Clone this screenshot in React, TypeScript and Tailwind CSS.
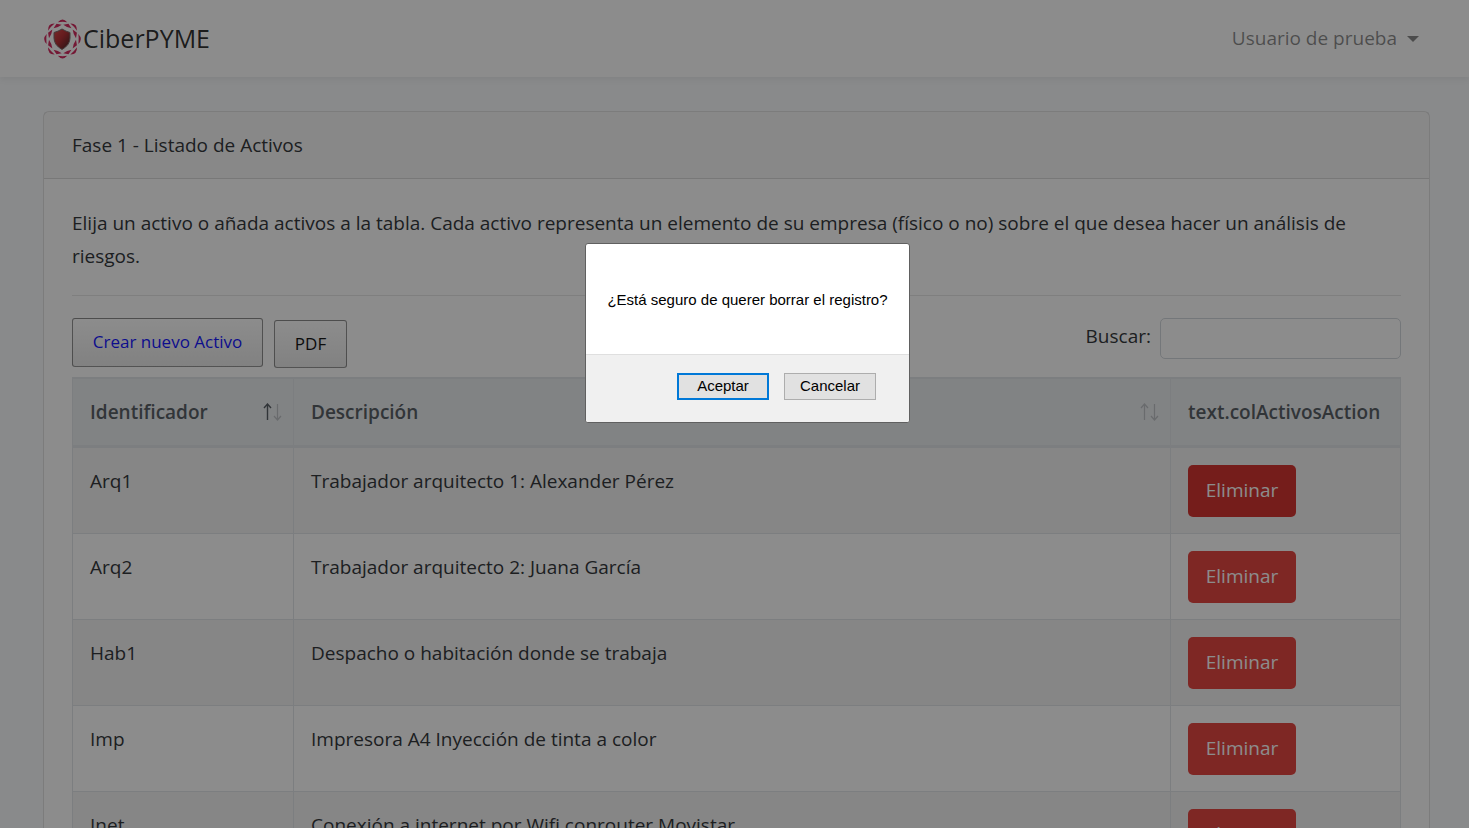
const rows = [
  ["Arq1", "Trabajador arquitecto 1: Alexander Pérez"],
  ["Arq2", "Trabajador arquitecto 2: Juana García"],
  ["Hab1", "Despacho o habitación donde se trabaja"],
  ["Imp", "Impresora A4 Inyección de tinta a color"],
  ["Inet", "Conexión a internet por Wifi conrouter Movistar"],
];

function Logo() {
  return (
    <svg width="40" height="42" viewBox="0 0 40 42" fill="none" aria-hidden="true">
      <defs>
        <linearGradient id="shield" x1="0" y1="0" x2="1" y2="1">
          <stop offset="0" stopColor="#d33a3a" />
          <stop offset="0.45" stopColor="#b01d22" />
          <stop offset="1" stopColor="#2c1013" />
        </linearGradient>
      </defs>
      <g fill="#cf1650" transform="translate(19.5 21) scale(0.94 1) translate(-19.5 -21)">
        {[0, 45, 90, 135, 180, 225, 270, 315].map((a) => (
          <g key={a} transform={`rotate(${a} 19.5 21)`}>
            <path d="M14.5 4.200Q19.5-1.2 24.5 4.2Q19.5 3.400 14.5 4.200Z" />
            <path d="M14.8 7.400L19.5 4.400L24.2 7.400Q19.5 8.600 14.8 7.400Z" transform="rotate(22.5 19.5 21)" />
          </g>
        ))}
      </g>
      <path d="M19 11Q23 13.500 27 14.500V20Q27 27 19 31.500Q11 27 11 20V14.500Q15 13.500 19 11Z" fill="url(#shield)" stroke="#6d5c5d" strokeWidth="1" />
    </svg>
  );
}

function SortArrows({ ascending = false }: { ascending?: boolean }) {
  return (
    <svg width="20" height="18" viewBox="0 0 20 18" fill="none" stroke="currentColor" className="shrink-0" aria-hidden="true">
      <path d="M4.500 17V1M1 5L4.500 1L8 5" strokeWidth={ascending ? 1.4 : 1.2} opacity={ascending ? 1 : 0.3} />
      <path d="M14.500 1V17M11 13L14.500 17L18 13" strokeWidth="1.2" opacity="0.3" />
    </svg>
  );
}

export default function App() {
  return (
    <div className="h-screen overflow-hidden bg-[#f8fafc] font-['Open_Sans',sans-serif] text-[19px] leading-[33px] text-[#212529]">
      <nav className="flex h-[77px] items-center justify-between bg-white pr-[50px] pl-[43px] shadow-[0_3px_6px_rgba(0,0,0,0.06)]">
        <a href="#" className="flex items-center text-[25px] text-black/90">
          <Logo />
          CiberPYME
        </a>
        <button type="button" className="flex items-center gap-[10px] text-black/50">
          Usuario de prueba
          <svg width="12" height="6" viewBox="0 0 12 6" fill="currentColor" aria-hidden="true">
            <path d="M0 0H12L6 6Z" />
          </svg>
        </button>
      </nav>

      <main className="mr-[39px] ml-[43px] pt-[34px]">
        <section className="rounded-[6px] border border-black/13 bg-white">
          <h1 className="border-b border-black/13 bg-black/3 px-7 pt-[17px] pb-4">Fase 1 - Listado de Activos</h1>
          <div className="p-7">
            <p>
              Elija un activo o añada activos a la tabla. Cada activo representa un elemento de su empresa (físico o no)
              sobre el que desea hacer un análisis de riesgos.
            </p>
            <hr className="mt-[22px] border-black/10" />
            <div className="mt-[22px] flex items-start justify-between">
              <div className="flex items-start gap-[11px] text-[17px]">
                <button type="button" className="h-[49px] min-w-[191px] rounded-[3px] border border-black/45 bg-linear-to-b from-white to-[#e9e9e9] px-[18px] pb-[2px] text-[#0000ff]">
                  Crear nuevo Activo
                </button>
                <button type="button" className="mt-[2px] h-12 min-w-[73px] rounded-[3px] border border-black/45 bg-linear-to-b from-white to-[#e9e9e9] px-[18px] pb-[2px] text-black">
                  PDF
                </button>
              </div>
              <label className="flex items-start gap-[9px]">
                <span className="pt-[2px]">Buscar:</span>
                <input type="search" className="h-[41px] w-[241px] rounded-[5px] border border-[#ced4da] bg-white px-3" />
              </label>
            </div>

            <table className="mt-[9px] w-full table-fixed border-separate border-spacing-0 border-t border-l border-[#dee2e6]">
              <thead>
                <tr className="h-[69px] bg-[#e9ecef] text-left text-[#495057]">
                  <th className="w-[221px] border-t border-r border-b-2 border-[#dee2e6] pr-[10px] pl-[17px] font-semibold">
                    <div className="flex items-center justify-between">
                      Identificador
                      <SortArrows ascending />
                    </div>
                  </th>
                  <th className="border-t border-r border-b-2 border-[#dee2e6] pr-[10px] pl-[17px] font-semibold">
                    <div className="flex items-center justify-between">
                      Descripción
                      <SortArrows />
                    </div>
                  </th>
                  <th className="w-[230px] border-t border-r border-b-2 border-[#dee2e6] pl-[17px] font-semibold">
                    text.colActivosAction
                  </th>
                </tr>
              </thead>
              <tbody>
                {rows.map(([id, description], i) => (
                  <tr key={id} className="align-top odd:bg-black/5">
                    <td className="border-t border-r border-[#dee2e6] p-[17px]">{id}</td>
                    <td className="border-t border-r border-[#dee2e6] p-[17px]">{description}</td>
                    <td className="border-t border-r border-[#dee2e6] px-[17px] pt-[17px] pb-4">
                      <button
                        type="button"
                        className={
                          i === 0
                            ? "block h-[52px] w-[108px] rounded-[5px] bg-[#d0211c] pb-[2px] text-white"
                            : "block h-[52px] w-[108px] rounded-[5px] bg-[#e3342f] pb-[2px] text-white"
                        }
                      >
                        Eliminar
                      </button>
                    </td>
                  </tr>
                ))}
              </tbody>
            </table>
          </div>
        </section>
      </main>

      <div className="fixed inset-0 flex items-start justify-center bg-[#1a1a1a]/50 pt-[243px] pl-[26px]">
        <div
          role="alertdialog"
          aria-modal="true"
          aria-labelledby="confirm-message"
          className="w-[325px] rounded-[3px] border border-[#606060] bg-white font-['Liberation_Sans',sans-serif] text-[15px] leading-5 text-black"
        >
          <p id="confirm-message" className="pt-[46px] pb-11 text-center">
            ¿Está seguro de querer borrar el registro?
          </p>
          <div className="flex justify-end gap-[15px] rounded-b-[2px] border-t border-[#dfdfdf] bg-[#f0f0f0] pt-[18px] pr-[33px] pb-[22px]">
            <button type="button" className="h-[27px] w-[92px] border-2 border-[#0078d7] bg-[#e1e1e1] pb-[2px]">
              Aceptar
            </button>
            <button type="button" className="h-[27px] w-[92px] border border-[#adadad] bg-[#e1e1e1] pb-[2px]">
              Cancelar
            </button>
          </div>
        </div>
      </div>
    </div>
  );
}
